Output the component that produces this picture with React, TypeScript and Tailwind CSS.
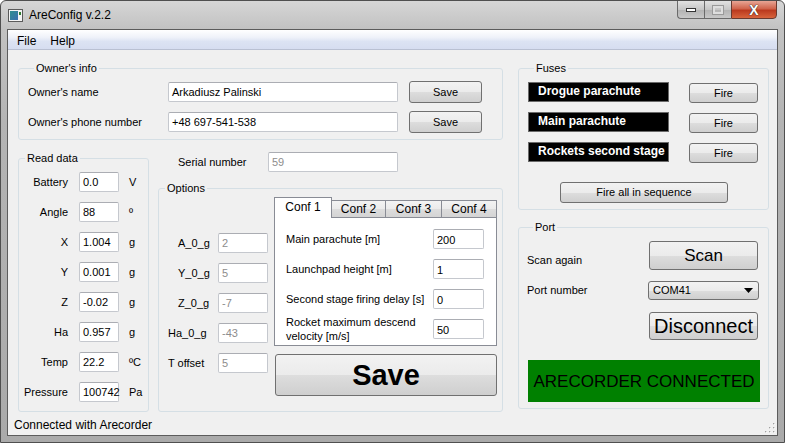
import type { ReactNode } from "react";

const btn =
  "border border-[#707070] rounded-[3px] bg-[linear-gradient(to_bottom,#f2f2f2_0%,#ebebeb_50%,#dddddd_51%,#cfcfcf_100%)] flex items-center justify-center text-black";
const box =
  "h-[20px] border border-[#c5c8ce] border-t-[#abadb3] rounded-[2px] bg-white px-[3px] flex items-center";

function Group({ title, className, children }: { title: string; className?: string; children: ReactNode }) {
  return (
    <fieldset className={`border border-[#d5dfe5] rounded-[3px] ${className ?? ""}`}>
      <legend className="ml-[6px] px-[2px] leading-[13px]">{title}</legend>
      {children}
    </fieldset>
  );
}

function WinIcon() {
  return (
    <svg width="15" height="13" viewBox="0 0 15 13">
      <rect x="0.5" y="0.5" width="14" height="12" fill="#f4f4f4" stroke="#5a5a5a" />
      <defs>
        <linearGradient id="ig" x1="0" y1="0" x2="1" y2="1">
          <stop offset="0" stopColor="#2f8f8f" />
          <stop offset="1" stopColor="#3a6fb0" />
        </linearGradient>
      </defs>
      <rect x="2" y="2" width="8" height="9" fill="url(#ig)" />
      <rect x="11" y="3" width="2" height="3" fill="#2e7d32" />
    </svg>
  );
}

const readData = [
  { label: "Battery", value: "0.0", unit: "V" },
  { label: "Angle", value: "88", unit: "º" },
  { label: "X", value: "1.004", unit: "g" },
  { label: "Y", value: "0.001", unit: "g" },
  { label: "Z", value: "-0.02", unit: "g" },
  { label: "Ha", value: "0.957", unit: "g" },
  { label: "Temp", value: "22.2", unit: "ºC" },
  { label: "Pressure", value: "100742", unit: "Pa" },
];

const offsets = [
  { label: "A_0_g", value: "2", pad: "pl-[19px]" },
  { label: "Y_0_g", value: "5", pad: "pl-[19px]" },
  { label: "Z_0_g", value: "-7", pad: "pl-[19px]" },
  { label: "Ha_0_g", value: "-43", pad: "pl-[9px]" },
  { label: "T offset", value: "5", pad: "pl-[9px]" },
];

const fuses = ["Drogue parachute", "Main parachute", "Rockets second stage"];

function App() {
  return (
    <div className="w-[785px] h-[443px] overflow-hidden flex flex-col border border-[#4f4f4f] rounded-t-[6px] bg-[linear-gradient(to_bottom,#d6d6d6_0px,#c2c2c2_28px,#b4b4b4_120px,#aaaaaa_100%)] font-['Liberation_Sans',Arial,sans-serif] text-[11px] leading-[13px] text-black">
      {/* title bar */}
      <div className="h-[28px] flex pl-[7px] pr-[7px] shrink-0">
        <div className="flex items-center gap-[6px] h-[26px] pt-[2px]">
          <WinIcon />
          <span className="text-[12px] text-black">AreConfig v.2.2</span>
        </div>
        <div className="flex-1" />
        <div className="flex h-[19px] -mt-px">
          <div className="w-[27px] h-full border border-[#6a6a6a] border-r-0 rounded-bl-[4px] bg-[linear-gradient(to_bottom,#e2e2e2,#c6c6c6_50%,#b2b2b2_51%,#c8c8c8)] flex items-center justify-center">
            <div className="w-[10px] h-[4px] bg-white border border-[#333]" />
          </div>
          <div className="w-[27px] h-full border border-[#6a6a6a] border-r-0 bg-[linear-gradient(to_bottom,#e2e2e2,#c6c6c6_50%,#b2b2b2_51%,#c8c8c8)] flex items-center justify-center">
            <div className="w-[10px] h-[8px] border-2 border-[#dedede] outline outline-1 outline-[#9a9a9a]" />
          </div>
          <div className="w-[46px] h-full border border-[#6a3a30] rounded-br-[4px] bg-[linear-gradient(to_bottom,#e8a595,#d0644c_45%,#bb3a1f_55%,#d8643c)] flex items-center justify-center">
            <span className="text-white font-bold text-[14px] leading-none [text-shadow:0_0_1px_#222,0_0_1px_#222]">X</span>
          </div>
        </div>
      </div>

      {/* client */}
      <div className="flex-1 mx-[6px] mb-[6px] border border-[#5c5c5c] bg-[#f0f0f0] flex flex-col">
        {/* menu */}
        <div className="h-[20px] shrink-0 flex items-center gap-[14px] pl-[9px] pt-[3px] text-[12px] bg-[linear-gradient(to_bottom,#ffffff,#eef1f9_40%,#dce3f3_60%,#d6ddf0)] border-b border-[#b9c0d2]">
          <span>File</span>
          <span>Help</span>
        </div>

        {/* content */}
        <div className="h-[362px] shrink-0 flex pl-[10px] pt-[12px] gap-[15px]">
          {/* left column */}
          <div className="w-[485px] flex flex-col">
            <Group title="Owner's info" className="pl-[9px] pt-[6px] pb-[6px]">
              <div className="flex items-center h-[22px]">
                <span className="w-[140px]">Owner's name</span>
                <div className={`${box} w-[230px]`}>Arkadiusz Palinski</div>
                <div className={`${btn} w-[73px] h-[22px] ml-[11px]`}>Save</div>
              </div>
              <div className="flex items-center h-[22px] mt-[8px]">
                <span className="w-[140px]">Owner's phone number</span>
                <div className={`${box} w-[230px]`}>+48 697-541-538</div>
                <div className={`${btn} w-[73px] h-[22px] ml-[11px]`}>Save</div>
              </div>
            </Group>

            <div className="flex mt-[12px]">
              <Group title="Read data" className="w-[131px] pt-[7px] pb-[8px]">
                <div className="flex flex-col gap-[10px]">
                  {readData.map((r) => (
                    <div key={r.label} className="flex items-center h-[20px]">
                      <span className="w-[49px] text-right">{r.label}</span>
                      <div className={`${box} w-[40px] ml-[11px] px-[2px]`}>{r.value}</div>
                      <span className="ml-[10px]">{r.unit}</span>
                    </div>
                  ))}
                </div>
              </Group>

              <div className="w-[345px] ml-[9px] flex flex-col">
                <div className="flex items-center h-[20px] pl-[20px]">
                  <span className="w-[90px]">Serial number</span>
                  <div className={`${box} w-[130px] text-[#8d8d8d]`}>59</div>
                </div>

                <Group title="Options" className="mt-[10px] pb-[15px]">
                  <div className="flex">
                    <div className="flex flex-col pt-[38px] gap-[10px]">
                      {offsets.map((o) => (
                        <div key={o.label} className="flex items-center h-[20px]">
                          <span className={`w-[59px] ${o.pad}`}>{o.label}</span>
                          <div className={`${box} w-[50px] text-[#8d8d8d]`}>{o.value}</div>
                        </div>
                      ))}
                    </div>

                    <div className="ml-[6px] mt-[2px] w-[223px] flex flex-col">
                      <div className="flex items-end h-[20px]">
                        <div className="w-[58px] h-[21px] -mb-px relative z-10 bg-white border border-b-0 border-[#898c95] flex justify-center pt-[3px] text-[12px]">
                          Conf 1
                        </div>
                        {[
                          { t: "Conf 2", w: "w-[54px]" },
                          { t: "Conf 3", w: "w-[56px]" },
                          { t: "Conf 4", w: "w-[55px]" },
                        ].map((tab) => (
                          <div
                            key={tab.t}
                            className={`${tab.w} h-[17px] border-t border-r border-[#898c95] bg-[linear-gradient(to_bottom,#f3f3f3,#ebebeb_50%,#dddddd_51%,#d4d4d4)] flex items-center justify-center text-[12px]`}
                          >
                            {tab.t}
                          </div>
                        ))}
                      </div>
                      <div className="h-[129px] border border-[#898c95] bg-white flex flex-col pt-[11px] pl-[11px] gap-[10px]">
                        {[
                          { l: <>Main parachute [m]</>, v: "200" },
                          { l: <>Launchpad height [m]</>, v: "1" },
                          { l: <>Second stage firing delay [s]</>, v: "0" },
                          {
                            l: (
                              <>
                                Rocket maximum descend
                                <br />
                                velocity [m/s]
                              </>
                            ),
                            v: "50",
                          },
                        ].map((f, i) => (
                          <div key={i} className="flex items-center h-[20px]">
                            <span className="w-[147px] leading-[14px]">{f.l}</span>
                            <div className={`${box} w-[51px] pt-[2px]`}>{f.v}</div>
                          </div>
                        ))}
                      </div>
                      <div className={`${btn} mt-[8px] ml-px w-[222px] h-[42px] text-[29px] font-bold leading-none`}>
                        Save
                      </div>
                    </div>
                  </div>
                </Group>
              </div>
            </div>
          </div>

          {/* right column */}
          <div className="w-[251px] flex flex-col">
            <Group title="Fuses" className="pl-[9px] pt-[7px] pb-[6px] flex flex-col">
              <div className="flex flex-col gap-[10px]">
                {fuses.map((f) => (
                  <div key={f} className="flex items-start h-[20px]">
                    <div className="w-[141px] h-[20px] bg-black border border-[#6a6a6a] text-white font-bold text-[12px] pl-[9px] pb-[2px] flex items-center">
                      {f}
                    </div>
                    <div className={`${btn} w-[69px] h-[20px] ml-[20px] mt-px`}>Fire</div>
                  </div>
                ))}
              </div>
              <div className={`${btn} w-[168px] h-[21px] mt-[20px] ml-[32px]`}>Fire all in sequence</div>
            </Group>

            <Group title="Port" className="mt-[11px] pl-[8px] pt-[7px] pb-[6px]">
              <div className="flex items-end">
                <span className="w-[122px] mb-[3px]">Scan again</span>
                <div className={`${btn} w-[109px] h-[29px] text-[17px]`}>Scan</div>
              </div>
              <div className="flex items-center mt-[11px]">
                <span className="w-[121px]">Port number</span>
                <div className={`${btn} w-[111px] h-[19px] !justify-between px-[4px]`}>
                  <span>COM41</span>
                  <svg width="9" height="5" viewBox="0 0 9 5" className="mr-[1px]">
                    <path d="M0 0 H9 L4.5 5 Z" fill="#000" />
                  </svg>
                </div>
              </div>
              <div className={`${btn} w-[109px] h-[28px] mt-[12px] ml-[122px] text-[20px]`}>Disconnect</div>
              <div className="w-[232px] h-[42px] mt-[20px] ml-px bg-[#008000] flex items-center justify-center text-[17px] text-black">
                ARECORDER CONNECTED
              </div>
            </Group>
          </div>
        </div>

        {/* status bar */}
        <div className="flex-1 flex items-center pl-[6px] pt-[4px] text-[12px] relative">
          <span>Connected with Arecorder</span>
          <svg width="11" height="11" viewBox="0 0 11 11" className="absolute right-[2px] bottom-[2px]">
            {[
              [9, 1],
              [9, 5],
              [5, 5],
              [9, 9],
              [5, 9],
              [1, 9],
            ].map(([x, y], i) => (
              <g key={i}>
                <rect x={x + 0.7} y={y + 0.7} width="1.3" height="1.3" fill="#ffffff" />
                <rect x={x} y={y} width="1.3" height="1.3" fill="#a0a0a0" />
              </g>
            ))}
          </svg>
        </div>
      </div>
    </div>
  );
}

export default App;
